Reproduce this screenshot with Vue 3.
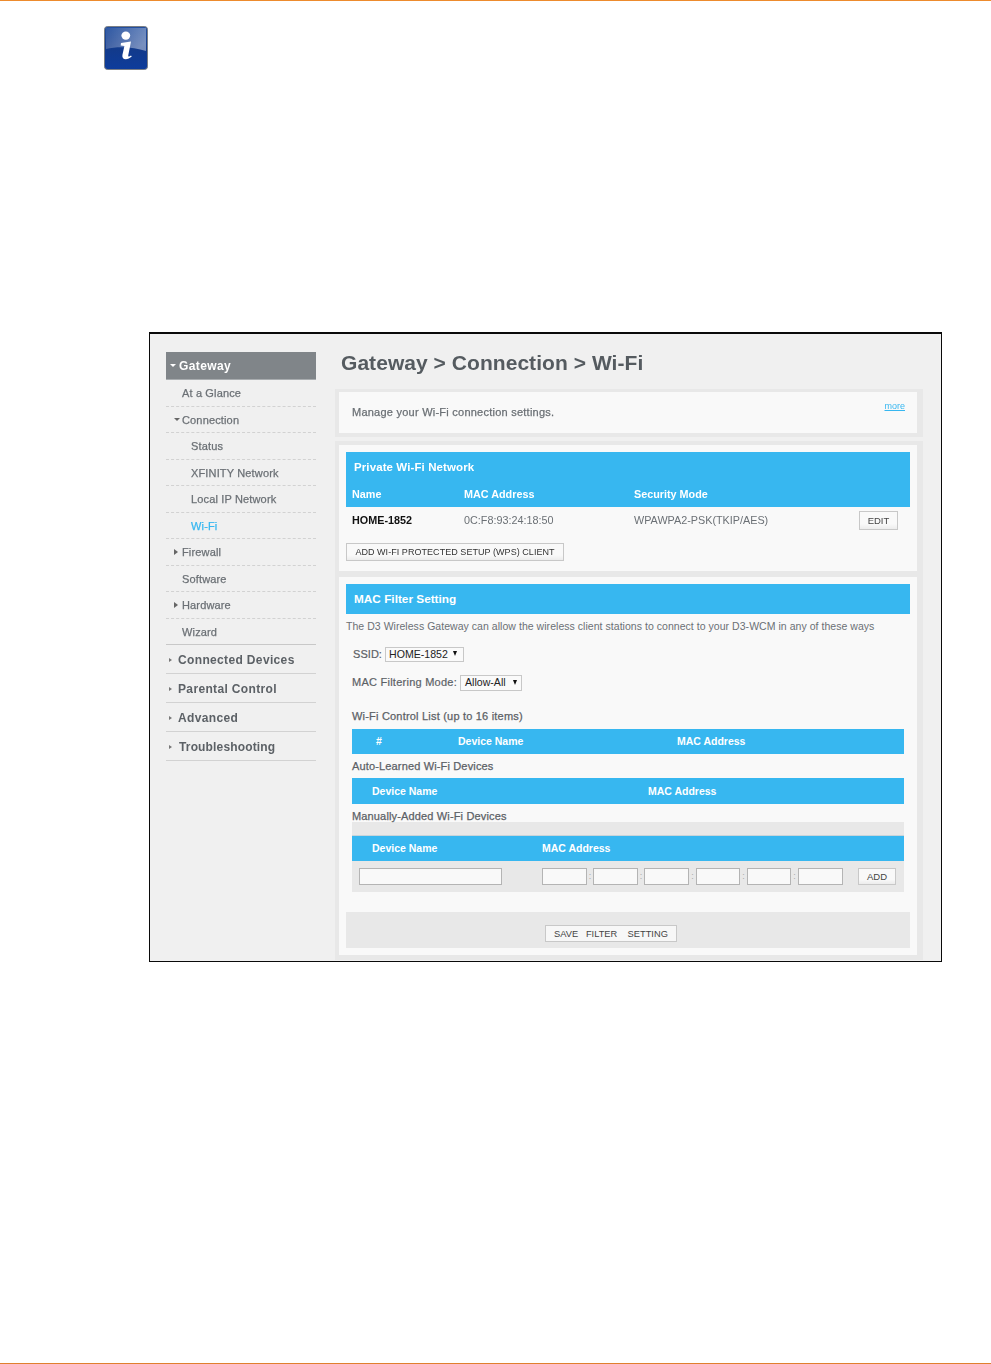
<script setup>
const nav = [
  { t: 'At a Glance', c: 'l1' },
  { t: 'Connection', c: 'l1 open' },
  { t: 'Status', c: 'l2' },
  { t: 'XFINITY Network', c: 'l2' },
  { t: 'Local IP Network', c: 'l2' },
  { t: 'Wi-Fi', c: 'l2 active' },
  { t: 'Firewall', c: 'l1 closed' },
  { t: 'Software', c: 'l1' },
  { t: 'Hardware', c: 'l1 closed' },
  { t: 'Wizard', c: 'l1 last' },
]
const top = ['Connected Devices', 'Parental Control', 'Advanced', 'Troubleshooting']
const octets = [45, 45, 45, 44, 44, 45]
</script>

<template>
  <div class="page">
    <header class="pagehead">
      <svg class="info" viewBox="0 0 44 44" width="44" height="44">
        <defs>
          <linearGradient id="bg" x1="0" y1="0" x2="0" y2="1">
            <stop offset="0" stop-color="#24509f" />
            <stop offset="0.55" stop-color="#123a8c" />
            <stop offset="1" stop-color="#0d3c9c" />
          </linearGradient>
          <linearGradient id="gloss" x1="0" y1="0" x2="1" y2="0.6">
            <stop offset="0" stop-color="#ffffff" stop-opacity="0.06" />
            <stop offset="1" stop-color="#ffffff" stop-opacity="0.42" />
          </linearGradient>
        </defs>
        <rect x="0.5" y="0.5" width="43" height="43" rx="3" fill="url(#bg)" stroke="#7b7f85" />
        <path d="M2 2H42V25C30 21 14 20 2 23Z" fill="url(#gloss)" />
        <ellipse cx="21.8" cy="9.6" rx="4.4" ry="4.2" fill="#fff" />
        <path d="M17 17L27 15.6L24.3 29C24 31 25 31 27 29.5L27.8 30.5C24 34 17.5 34.5 18.4 29L20.4 20L16.7 19.5Z" fill="#fff" />
      </svg>
    </header>

    <section class="frame">
      <aside class="side">
        <div class="gw"><i class="tri-d w"></i>Gateway</div>
        <ul class="nav">
          <li v-for="n in nav" :key="n.t" :class="n.c">{{ n.t }}</li>
        </ul>
        <ul class="topnav">
          <li v-for="t in top" :key="t">{{ t }}</li>
        </ul>
      </aside>

      <main class="main">
        <h1>Gateway &gt; Connection &gt; Wi-Fi</h1>

        <div class="card c1">
          <span class="manage">Manage your Wi-Fi connection settings.</span>
          <a class="more">more</a>
        </div>

        <div class="card c2">
          <div class="bluehead">
            <div class="ttl">Private Wi-Fi Network</div>
            <div class="cols"><b>Name</b><b>MAC Address</b><b>Security Mode</b></div>
          </div>
          <div class="cols datarow">
            <b class="home">HOME-1852</b><span>0C:F8:93:24:18:50</span><span>WPAWPA2-PSK(TKIP/AES)</span>
            <button class="btn edit">EDIT</button>
          </div>
          <button class="btn wps">ADD WI-FI PROTECTED SETUP (WPS) CLIENT</button>
        </div>

        <div class="card c3">
          <div class="macttl">MAC Filter Setting</div>
          <p class="desc">The D3 Wireless Gateway can allow the wireless client stations to connect to your D3-WCM in any of these ways</p>
          <div class="inner">
            <div class="field ssid"><label>SSID:</label><span class="sel s1">HOME-1852<i class="tri-d k"></i></span></div>
            <div class="field mode"><label>MAC Filtering Mode:</label><span class="sel s2">Allow-All<i class="tri-d k"></i></span></div>
            <h3 class="lbl l-list">Wi-Fi Control List (up to 16 items)</h3>
            <div class="bar b1"><b class="a">#</b><b class="b">Device Name</b><b class="c">MAC Address</b></div>
            <h3 class="lbl l-auto">Auto-Learned Wi-Fi Devices</h3>
            <div class="bar b2"><b class="a">Device Name</b><b class="b">MAC Address</b></div>
            <h3 class="lbl l-man">Manually-Added Wi-Fi Devices</h3>
            <div class="addbox">
              <div class="bar b3"><b class="a">Device Name</b><b class="b">MAC Address</b></div>
              <div class="addrow">
                <input class="inp name" />
                <div class="macs">
                  <template v-for="(w, i) in octets" :key="i">
                    <span v-if="i" class="colon" :class="{ wide: i > 2 }">:</span>
                    <input class="inp" :style="{ width: w + 'px' }" />
                  </template>
                </div>
                <button class="btn add">ADD</button>
              </div>
            </div>
          </div>
          <div class="savebar"><button class="btn save">SAVE&nbsp;&nbsp;&nbsp;FILTER&nbsp;&nbsp;&nbsp;&nbsp;SETTING</button></div>
        </div>
      </main>
    </section>
    <footer class="pagefoot"></footer>
  </div>
</template>

<style>
html, body { margin: 0; background: #fff; }
</style>

<style scoped>
.page {
  width: 991px; height: 1364px; box-sizing: border-box; position: relative; overflow: hidden;
  border-top: 1px solid #ed8b2d;
  font-family: "Liberation Sans", Arial, sans-serif;
  color: #5c6166;
}
.pagehead { height: 331px; padding: 25px 0 0 104px; box-sizing: border-box; }
.info { display: block; filter: blur(0.3px); }
.pagefoot { position: absolute; left: 0; right: 0; bottom: 0; height: 1px; background: #e0802e; }

.frame {
  width: 793px; height: 630px; margin-left: 149px; box-sizing: border-box; overflow: hidden;
  border: 1px solid #0a0a0a; border-top-width: 2px;
  background: #f0f0f0; display: flex;
}
.side { width: 150px; margin-left: 16px; padding-top: 18px; flex: none; filter: blur(0.3px); }
.gw {
  height: 28px; box-sizing: border-box; background: #808589; border-bottom: 1px solid #a8acaf; color: #fff; font-weight: 700;
  font-size: 12px; line-height: 28px; padding-left: 4px; display: flex; align-items: center; gap: 3px; letter-spacing: .4px;
}
.tri-d { display: inline-block; width: 0; height: 0; border-left: 3px solid transparent; border-right: 3px solid transparent; border-top: 3.5px solid #fff; }
.tri-d.k { border-top-color: #111; border-left-width: 2.5px; border-right-width: 2.5px; border-top-width: 5px; }
.nav, .topnav { list-style: none; margin: 0; padding: 0; }
.nav li {
  height: 26.5px; box-sizing: border-box; line-height: 27px; border-bottom: 1px dashed #d2d2d2; font-size: 11px; font-weight: 400;
  color: #6b7075; position: relative; white-space: nowrap; -webkit-text-stroke: 0.25px #6b7075; letter-spacing: .15px;
}
.nav .l1 { padding-left: 16px; }
.nav .l2 { padding-left: 25px; }
.nav .active { color: #37b7f0; -webkit-text-stroke: 0.25px #37b7f0; }
.nav .last { border-bottom: 1px solid #c8c8c8; }
.nav .open::before { content: ''; position: absolute; left: 8px; top: 11px; border-left: 3px solid transparent; border-right: 3px solid transparent; border-top: 3px solid #666; }
.nav .closed::before { content: ''; position: absolute; left: 8px; top: 10px; border-top: 3px solid transparent; border-bottom: 3px solid transparent; border-left: 4px solid #666; }
.topnav li {
  height: 29px; box-sizing: border-box; line-height: 31px; border-bottom: 1px solid #d2d2d2; font-size: 12px; font-weight: 700; color: #5c6166;
  padding-left: 12px; position: relative; letter-spacing: 0.35px;
}
.topnav li:last-child { padding-left: 13px; letter-spacing: .15px; }
.topnav li::before { content: ''; position: absolute; left: 3px; top: 13px; border-top: 2.5px solid transparent; border-bottom: 2.5px solid transparent; border-left: 3.5px solid #777; }

.main { width: 588px; margin-left: 19px; flex: none; filter: blur(0.3px); }
h1 { margin: 0; height: 55px; padding: 16px 0 0 6px; box-sizing: border-box; font-size: 21px; line-height: 25px; font-weight: 700; color: #555b60; white-space: nowrap; letter-spacing: .05px; }
.card {
  background: #f9f9f9; box-sizing: border-box; width: 588px; border: 4px solid #e8e8e8; border-width: 3px 6px 4px 4px; position: relative;
}
.c1 { height: 48px; padding: 14px 0 0 13px; color: #6b7075; margin-bottom: 4px; }
.manage { -webkit-text-stroke: 0.25px #6b7075; font-size: 11px; letter-spacing: .24px; display: block; line-height: 13px; }
.more { position: absolute; right: 12px; top: 9px; font-size: 9px; color: #37b7f0; text-decoration: underline; }
.c2 { height: 133px; padding: 7px 7px 0; border-width: 4px 6px 3px 4px; }
.bluehead { background: #37b7f0; height: 55px; color: #fff; font-size: 11px; box-sizing: border-box; padding-top: 9px; }
.ttl { font-weight: 700; padding-left: 8px; line-height: 13px; height: 27px; font-size: 11.5px; letter-spacing: .1px; }
.cols { display: grid; grid-template-columns: 112px 170px 225px 1fr; padding-left: 6px; align-items: center; font-size: 10.8px; line-height: 13px; }
.datarow { height: 26px; color: #6b7075; }
.home { color: #111; }
.btn {
  font-family: inherit; font-size: 9.5px; padding: 0; color: #444; background: linear-gradient(#f9f9f9 70%, #ececec);
  border: 1px solid #c8c8c8; box-sizing: border-box; display: block;
}
.edit { width: 39px; height: 19px; }
.wps { width: 218px; height: 18px; margin-top: 10px; font-size: 9px; color: #333; letter-spacing: .05px; }
.c3 { height: 386px; padding: 7px 7px 0; border-width: 3px 6px 5px 4px; }
.macttl { background: #37b7f0; color: #fff; font-weight: 700; font-size: 11.8px; height: 30px; line-height: 30px; padding-left: 8px; }
.desc { margin: 6px 0 0; font-size: 10.5px; line-height: 13px; color: #6b7075; white-space: nowrap; letter-spacing: .04px; }
.inner { padding: 0 6px; }
.field { display: flex; align-items: center; font-size: 11px; color: #5c6166; -webkit-text-stroke: 0.2px #5c6166; }
.field label { padding-bottom: 2px; }
.ssid { margin-top: 14px; height: 15px; padding-left: 1px; }
.ssid label { margin-right: 3px; letter-spacing: .05px; }
.mode { margin-top: 13px; height: 16px; }
.mode label { margin-right: 3px; letter-spacing: .25px; }
.sel { border: 1px solid #c8c8c8; background: #fafafa; color: #222; -webkit-text-stroke: 0; box-sizing: border-box; height: 100%; display: flex; align-items: center; justify-content: space-between; padding: 0 6px 2px 3px; font-size: 10.6px; }
.s1 { width: 79px; }
.s2 { width: 62px; padding-left: 4px; padding-right: 4px; }
.lbl { margin: 0; font-size: 11px; line-height: 13px; font-weight: 400; color: #5c6166; -webkit-text-stroke: 0.25px #5c6166; letter-spacing: .15px; }
.l-list { margin-top: 19px; letter-spacing: .2px; }
.l-auto { margin-top: 6px; }
.l-man { margin-top: 6px; }
.bar { background: #37b7f0; color: #fff; font-size: 10.5px; position: relative; }
.bar b { position: absolute; top: 50%; transform: translateY(-50%); white-space: nowrap; }
.b1 { height: 25px; margin-top: 6px; }
.b1 b, .b3 b { margin-top: -1px; }
.b1 .a { left: 24px; } .b1 .b { left: 106px; } .b1 .c { left: 325px; }
.b2 { height: 26px; margin-top: 5px; }
.b2 .a { left: 20px; } .b2 .b { left: 296px; }
.addbox { background: #e8e8e8; padding-top: 13px; margin-top: -1px; height: 70px; box-sizing: border-box; }
.b3 { height: 26px; border-top: 1px solid #c8d4da; box-sizing: border-box; }
.b3 .a { left: 20px; } .b3 .b { left: 190px; }
.addrow { display: flex; align-items: center; padding: 7px 8px 0 7px; }
.inp { height: 17px; box-sizing: border-box; border: 1px solid #b4b4b4; background: #f9f9f9; padding: 0; margin: 0; display: block; }
.name { width: 143px; margin-right: 40px; }
.macs { display: flex; align-items: center; }
.colon { width: 6px; text-align: center; font-size: 9px; color: #aaa; line-height: 17px; }
.colon.wide { width: 7px; }
.add { width: 38px; height: 17px; margin-left: 15px; }
.savebar { margin-top: 20px; height: 36px; background: #e8e8e8; display: flex; padding: 13px 0 0 199px; box-sizing: border-box; }
.save { width: 132px; height: 17px; background: #f7f7f7; white-space: nowrap; font-size: 9.3px; }
</style>
